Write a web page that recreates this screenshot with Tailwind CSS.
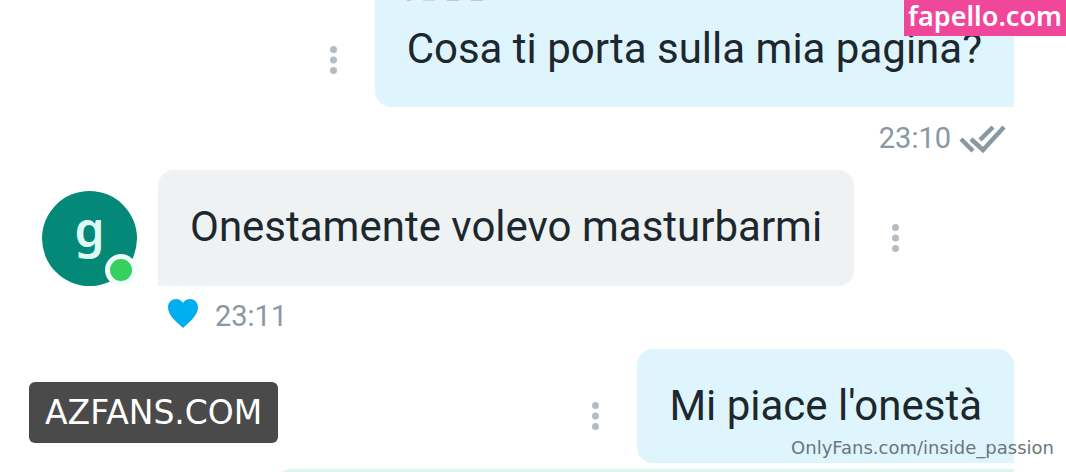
<!DOCTYPE html>
<html lang="it">
<head>
  <meta charset="UTF-8" />
  <meta name="viewport" content="width=device-width, initial-scale=1.0" />
  <script src="https://cdn.jsdelivr.net/npm/@tailwindcss/browser@4"></script>
  <title>Chat</title>
</head>
<body class="relative h-screen overflow-hidden bg-white font-['Roboto',sans-serif] text-[#1d272e]">

  <main class="flex h-screen flex-col overflow-hidden pl-[42px] pr-[52px]">

    <!-- messaggio inviato -->
    <section class="flex flex-col items-end">
      <div class="flex items-start gap-[38px]">
        <button type="button" aria-label="Opzioni messaggio" class="mt-[46px] text-[#b4bbc1]">
          <svg class="block h-7 w-[7px]" viewBox="0 0 7 28" fill="currentColor"><circle cx="3.5" cy="3.5" r="3.5" /><circle cx="3.5" cy="14" r="3.5" /><circle cx="3.5" cy="24.5" r="3.5" /></svg>
        </button>
        <div class="rounded-bl-2xl bg-[#def5fd] px-8 pb-[34px]">
          <!-- bordo inferiore della riga precedente, fuori vista -->
          <div class="flex h-[25px] items-start gap-3">
            <span class="h-px w-1 bg-[#b5ced8]"></span>
            <span class="h-px w-3 bg-[#c3dde6]"></span>
            <span class="h-px w-3 bg-[#b5ced8]"></span>
            <span class="h-px w-3 bg-[#b5ced8]"></span>
          </div>
          <p class="text-[42px] leading-[48px] whitespace-nowrap">Cosa ti porta sulla mia pagina?</p>
        </div>
      </div>
      <div class="flex h-[63px] items-center gap-2 pr-2 text-[29px] text-[#8a98a3]">
        <time>23:10</time>
        <svg class="h-7 w-[47px]" viewBox="0 0 47 28" fill="none" stroke="currentColor" stroke-width="4.500"><path d="M2 14l12 12M12 14l12 11L45 2M21 15L34 2" /></svg>
      </div>
    </section>

    <!-- messaggio ricevuto -->
    <section class="flex flex-col items-start">
      <div class="flex items-end gap-[21px]">
        <div class="relative flex size-[95px] items-center justify-center rounded-full bg-[#048878]">
          <span class="pb-5 font-['Noto_Sans',sans-serif] text-[48px] leading-none font-semibold text-[#defaf5]">g</span>
          <span class="absolute right-0 bottom-0 size-8 rounded-full border-[5px] border-[#f0fffc] bg-[#35d05f]"></span>
        </div>
        <div class="flex items-center gap-[38px]">
          <div class="rounded-2xl rounded-bl-none bg-[#eef2f3] px-8 pt-[33px] pb-[35px]">
            <p class="text-[42px] leading-[48px] whitespace-nowrap">Onestamente volevo masturbarmi</p>
          </div>
          <button type="button" aria-label="Opzioni messaggio" class="mt-5 text-[#b4bbc1]">
            <svg class="block h-7 w-[7px]" viewBox="0 0 7 28" fill="currentColor"><circle cx="3.5" cy="3.5" r="3.5" /><circle cx="3.5" cy="14" r="3.5" /><circle cx="3.5" cy="24.5" r="3.5" /></svg>
          </button>
        </div>
      </div>
      <div class="flex h-[63px] items-center gap-4 pb-0.5 pl-[125px] text-[29px] text-[#8a98a3]">
        <button type="button" aria-label="Mi piace" class="pb-2 text-[#00aeef]">
          <svg class="block h-[30px] w-8" viewBox="0 0 32 30" fill="currentColor"><path d="M16 30C12 26 1 18 1 9.500C1 4 5 1 9 1C12 1 14.500 2.500 16 5C17.500 2.500 20 1 23 1C27 1 31 4 31 9.500C31 18 20 26 16 30Z" /></svg>
        </button>
        <time>23:11</time>
      </div>
    </section>

    <!-- messaggio inviato -->
    <section class="flex flex-col items-end">
      <div class="flex items-center gap-[38px]">
        <button type="button" aria-label="Opzioni messaggio" class="mt-5 text-[#b4bbc1]">
          <svg class="block h-7 w-[7px]" viewBox="0 0 7 28" fill="currentColor"><circle cx="3.5" cy="3.5" r="3.5" /><circle cx="3.5" cy="14" r="3.5" /><circle cx="3.5" cy="24.5" r="3.5" /></svg>
        </button>
        <div class="rounded-2xl rounded-br-none bg-[#def5fd] px-8 py-[33px]">
          <p class="text-[42px] leading-[48px] whitespace-nowrap">Mi piace l'onestà</p>
        </div>
      </div>
      <div class="mt-1.5 h-12 w-[76%] rounded-tl-2xl bg-[#def5f4]"></div>
    </section>
  </main>

  <a href="#" class="absolute top-0 right-0 flex h-9 items-center bg-[#f0479b] px-1 pb-1 font-['Noto_Sans',sans-serif] text-[27px] leading-8 font-semibold text-white">fapello.com</a>
  <a href="#" class="absolute bottom-[29px] left-[29px] flex h-[61px] items-center rounded-md bg-[#4a4a4a] px-4 font-['DejaVu_Sans',sans-serif] text-[33px] text-white">AZFANS.COM</a>
  <a href="#" class="absolute right-3 bottom-3 font-['DejaVu_Sans',sans-serif] text-[18px] leading-6 text-[#6b767b]">OnlyFans.com/inside_passion</a>

</body>
</html>
